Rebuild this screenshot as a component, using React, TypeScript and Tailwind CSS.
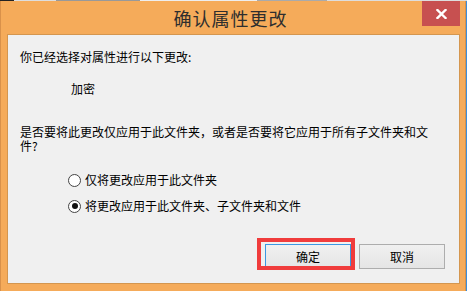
import React from "react";

const font = { fontFamily: '"Noto Sans CJK SC", "Noto Sans", sans-serif' };

function Radio({ checked, label }: { checked?: boolean; label: string }) {
  return (
    <div className="flex items-center h-[20px]">
      <span className="w-[13px] h-[13px] rounded-full border border-[#444] bg-white flex items-center justify-center">
        {checked && <span className="w-[6px] h-[6px] rounded-full bg-[#111]" />}
      </span>
      <span className="ml-[4px] text-[12px] leading-[14px] text-black">{label}</span>
    </div>
  );
}

export default function App() {
  return (
    <div className="w-[467px] h-[291px] flex flex-col overflow-hidden bg-[#f5ab5a]" style={font}>
      {/* strip of whatever is behind the window */}
      <div className="h-px bg-[linear-gradient(90deg,#222_0_3%,#ddd_3%_12%,#999_12%_30%,#eee_30%_55%,#aaa_55%_70%,#ddd_70%_100%)]" />

      <div className="flex flex-1 min-h-0">
        {/* window */}
        <div className="flex-1 flex flex-col border-l border-r border-[#d9914a] bg-[#f5ab5a]">
          {/* title bar */}
          <div className="grid grid-cols-[1fr_auto_1fr] h-[33px] pr-[5px]">
            <div />
            <div className="flex items-center text-[18px] leading-none text-[#2e2e2e] tracking-[1px]">
              确认属性更改
            </div>
            <div className="flex justify-end items-start">
              <button className="w-[38px] h-[25px] bg-[#c75050] flex items-center justify-center">
                <svg width="11" height="10" viewBox="0 0 11 10">
                  <path d="M1.5 1 L9.5 9 M9.5 1 L1.5 9" stroke="#fff" strokeWidth="2.4" strokeLinecap="square" />
                </svg>
              </button>
            </div>
          </div>

          {/* content panel */}
          <div className="ml-[6px] mr-[5px] h-[250px] border border-[#d4964f] bg-[#f0f0f0] flex flex-col pl-[12px] pr-[14px] text-[12px] text-black">
            <p className="mt-[14px] leading-[15px]">你已经选择对属性进行以下更改:</p>
            <p className="mt-[17px] ml-[51px] leading-[15px]">加密</p>
            <p className="mt-[29px] w-[414px] leading-[14px]">
              是否要将此更改仅应用于此文件夹，或者是否要将它应用于所有子文件夹和文件?
            </p>
            <div className="mt-[17px] ml-[48px] flex flex-col gap-[6px]">
              <Radio label="仅将更改应用于此文件夹" />
              <Radio checked label="将更改应用于此文件夹、子文件夹和文件" />
            </div>
            <div className="mt-[28px] flex justify-end gap-[8px]">
              <div className="relative">
                <button className="w-[86px] h-[25px] border border-[#3c97e2] bg-[linear-gradient(#f0f0f0,#e5e5e5)] text-[12px] leading-none">
                  确定
                </button>
                <div className="absolute left-[-8px] top-[-6px] w-[98px] h-[32px] border-[4px] border-[#f03c3c] pointer-events-none" />
              </div>
              <button className="w-[86px] h-[25px] border border-[#adadad] bg-[linear-gradient(#f0f0f0,#e5e5e5)] text-[12px] leading-none">
                取消
              </button>
            </div>
          </div>
        </div>
        {/* edge of the desktop behind */}
        <div className="w-px bg-[#3b8edb]" />
      </div>
    </div>
  );
}
